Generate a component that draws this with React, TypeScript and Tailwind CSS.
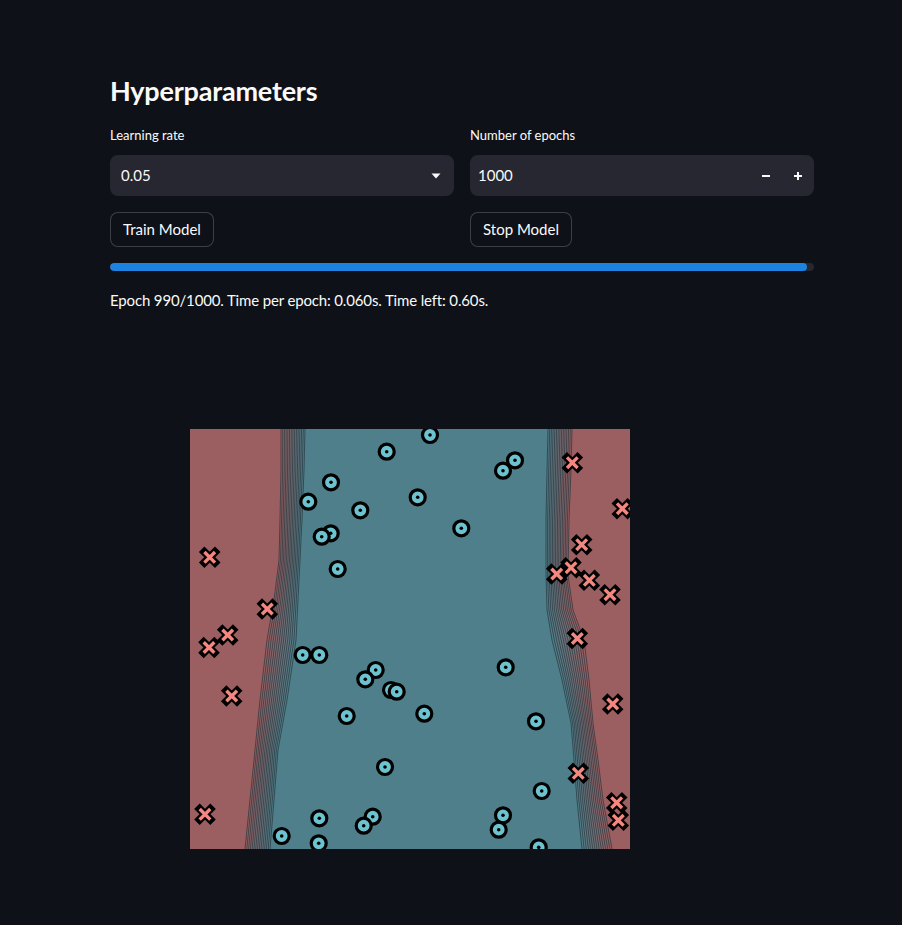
import React from "react";

type Row = [number, number, number];

const OX = 190;
const OY = 429;
const W = 440;
const H = 420;

const leftBand: Row[] = [
  [429, 281, 305],
  [470, 281, 304],
  [520, 280, 302],
  [560, 279, 300],
  [600, 274, 298],
  [640, 267, 296],
  [700, 260, 287],
  [750, 255, 278],
  [800, 250, 274],
  [849, 245, 270],
];

const rightBand: Row[] = [
  [429, 548, 572],
  [470, 547, 571],
  [520, 546, 569],
  [575, 546, 568],
  [610, 547, 573],
  [640, 552, 584],
  [680, 562, 589],
  [723, 571, 593],
  [760, 574, 598],
  [800, 577, 603],
  [849, 582, 612],
];

const RED = [155, 95, 97];
const TEAL = [79, 127, 138];

function mix(a: number[], b: number[], t: number) {
  const c = a.map((v, i) => Math.round(v + (b[i] - v) * t));
  return `rgb(${c[0]},${c[1]},${c[2]})`;
}

function lineAt(band: Row[], t: number) {
  return band.map(([y, xl, xr]) => [xl + (xr - xl) * t - OX, y - OY] as [number, number]);
}

function toPath(pts: [number, number][]) {
  return pts.map((p, i) => `${i === 0 ? "M" : "L"}${p[0].toFixed(2)},${p[1].toFixed(2)}`).join(" ");
}

const N = 14;

function Band({ band, fromColor, toColor }: { band: Row[]; fromColor: number[]; toColor: number[] }) {
  const strips: React.ReactNode[] = [];
  const lines: React.ReactNode[] = [];
  for (let i = 0; i < N; i++) {
    const a = lineAt(band, i / N);
    const b = lineAt(band, (i + 1) / N);
    const poly = [...a, ...b.slice().reverse()].map((p) => `${p[0]},${p[1]}`).join(" ");
    strips.push(<polygon key={`s${i}`} points={poly} fill={mix(fromColor, toColor, (i + 0.5) / N)} />);
  }
  for (let i = 0; i <= N; i++) {
    lines.push(
      <path
        key={`l${i}`}
        d={toPath(lineAt(band, i / N))}
        fill="none"
        stroke="#1f2a30"
        strokeOpacity={0.8}
        strokeWidth={0.75}
      />
    );
  }
  return (
    <g>
      {strips}
      {lines}
    </g>
  );
}

const circles: [number, number][] = [
  [430, 435], [386.7, 451.7], [515, 460.3], [503, 470.7], [331, 482.3], [308.3, 501.7],
  [417.7, 497.3], [360.3, 510.3], [461.3, 528.3], [330.7, 533.3], [321.7, 536.7], [337.7, 569],
  [302.7, 655], [319.3, 655], [375.7, 670], [365.3, 679.3], [505.7, 667.3], [391, 690],
  [396.7, 691.7], [346.7, 716], [424.3, 713.7], [536, 721.3], [385, 767], [541.7, 791],
  [319.3, 818.3], [372.7, 816.7], [503, 815.3], [363.7, 825.7], [498.7, 829.7], [281.7, 836],
  [318.7, 843.3], [538.7, 847.3],
];

const crosses: [number, number][] = [
  [572.3, 462.7], [622.3, 508.7], [209.7, 557.3], [581.7, 544.7], [571, 567.7], [556.7, 574],
  [589.3, 580.3], [610, 594.7], [267.3, 609], [577.3, 638.5], [227.7, 635], [209, 647.5],
  [231.7, 696], [612.7, 704], [578.3, 773.3], [205, 814.3], [616.7, 802.7], [618.3, 820.3],
];

function Plot() {
  const leftRed = [[0, 0], ...lineAt(leftBand, 0), [0, H]].map((p) => `${p[0]},${p[1]}`).join(" ");
  const rightRed = [[W, 0], ...lineAt(rightBand, 1), [W, H]].map((p) => `${p[0]},${p[1]}`).join(" ");
  return (
    <svg width={W} height={H} viewBox={`0 0 ${W} ${H}`} className="block">
      <rect x={0} y={0} width={W} height={H} fill={mix(TEAL, TEAL, 0)} />
      <polygon points={leftRed} fill={mix(RED, RED, 0)} />
      <polygon points={rightRed} fill={mix(RED, RED, 0)} />
      <Band band={leftBand} fromColor={RED} toColor={TEAL} />
      <Band band={rightBand} fromColor={TEAL} toColor={RED} />
      {crosses.map(([x, y], i) => (
        <g key={`x${i}`} transform={`translate(${x - OX},${y - OY})`}>
          <path d="M-5.3,-5.3 L5.3,5.3 M-5.3,5.3 L5.3,-5.3" stroke="#000" strokeWidth={7.8} strokeLinecap="square" fill="none" />
          <path d="M-5.3,-5.3 L5.3,5.3 M-5.3,5.3 L5.3,-5.3" stroke="#f4877f" strokeWidth={3.4} strokeLinecap="butt" fill="none" />
        </g>
      ))}
      {circles.map(([x, y], i) => (
        <g key={`c${i}`} transform={`translate(${x - OX},${y - OY})`}>
          <circle r={7.5} fill="#6cc3cf" stroke="#000" strokeWidth={3.2} />
          <circle r={1.8} fill="#000" />
        </g>
      ))}
    </svg>
  );
}

export default function App() {
  return (
    <div
      className="min-h-[925px] w-full bg-[#0e1117] text-[#fafafa]"
      style={{ fontFamily: "Lato, 'Noto Sans', sans-serif" }}
    >
      <div className="ml-[110px] w-[704px] pt-[74px]">
        <h2 className="text-[27px] font-bold leading-[34px] tracking-[-0.2px]">Hyperparameters</h2>
        <div className="mt-[16px] grid grid-cols-2 gap-4">
          <div>
            <div className="text-[13px] leading-[22px]">Learning rate</div>
            <div className="mt-[9px] flex h-[41px] items-center justify-between rounded-lg bg-[#262730] pl-[11px] pr-[13px]">
              <span className="text-[15px]">0.05</span>
              <svg width="10" height="6" viewBox="0 0 10 6">
                <path d="M0.5,0.5 L9.5,0.5 L5,5.5 Z" fill="#fafafa" />
              </svg>
            </div>
          </div>
          <div>
            <div className="text-[13px] leading-[22px]">Number of epochs</div>
            <div className="mt-[9px] flex h-[41px] items-center rounded-lg bg-[#262730] pl-[8px]">
              <span className="flex-1 text-[15px]">1000</span>
              <div className="flex h-full w-[32px] items-center justify-center">
                <svg width="10" height="10" viewBox="0 0 10 10">
                  <rect x="1" y="4" width="8" height="2" fill="#fafafa" />
                </svg>
              </div>
              <div className="flex h-full w-[32px] items-center justify-center">
                <svg width="10" height="10" viewBox="0 0 10 10">
                  <rect x="1" y="4" width="8" height="2" fill="#fafafa" />
                  <rect x="4" y="1" width="2" height="8" fill="#fafafa" />
                </svg>
              </div>
            </div>
          </div>
        </div>
        <div className="mt-[16px] grid grid-cols-2 gap-4">
          <div>
            <button className="h-[35px] rounded-lg border border-[#fafafa33] bg-[#0e1117] px-[12px] text-[15px]">
              Train Model
            </button>
          </div>
          <div>
            <button className="h-[35px] rounded-lg border border-[#fafafa33] bg-[#0e1117] px-[12px] text-[15px]">
              Stop Model
            </button>
          </div>
        </div>
        <div className="mt-[16px] h-[8px] w-full overflow-hidden rounded-full bg-[#262730]">
          <div className="h-full rounded-full bg-[#1c83e1]" style={{ width: "99%" }} />
        </div>
        <div className="mt-[17px] text-[15px] leading-[24px] tracking-[-0.15px]">
          Epoch 990/1000. Time per epoch: 0.060s. Time left: 0.60s.
        </div>
      </div>
      <div className="ml-[190px] mt-[117px] w-[440px]">
        <Plot />
      </div>
    </div>
  );
}
